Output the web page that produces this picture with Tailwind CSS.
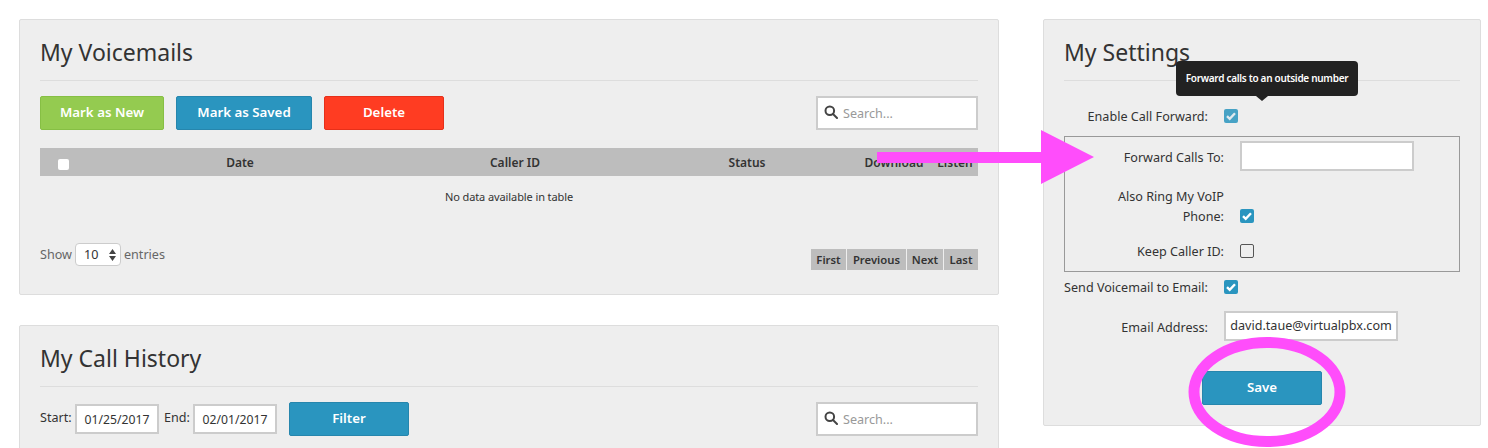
<!DOCTYPE html>
<html lang="en">
<head>
    <meta charset="UTF-8">
    <title>My Voicemails</title>
    <script src="https://cdn.jsdelivr.net/npm/@tailwindcss/browser@4"></script>
</head>
<body class="bg-white">
<div class="relative h-[448px] w-[1488px] overflow-hidden font-['Noto_Sans',sans-serif] text-[12.6px] text-[#333]">
    <div class="flex items-start pl-[19px] pt-[19px]">
        <!-- left column -->
        <div class="flex w-[980px] flex-col gap-[30px]">
            <section class="h-[276px] rounded-[2px] border border-[#ddd] bg-[#eee] px-5 pt-[13px]">
                <h2 class="h-[48px] border-b border-[#ddd] text-[23px] leading-[38px]">My Voicemails</h2>
                <div class="mt-[15px] flex items-center">
                    <button class="h-[34px] w-[124px] rounded-[2px] border border-[#86bf44] bg-[#94cb50] text-[13.3px] font-semibold text-white">Mark as New</button>
                    <button class="ml-3 h-[34px] w-[136px] rounded-[2px] border border-[#2686ad] bg-[#2a95bf] text-[13.3px] font-semibold text-white">Mark as Saved</button>
                    <button class="ml-3 h-[34px] w-[120px] rounded-[2px] border border-[#e6301a] bg-[#ff3c22] text-[13.3px] font-semibold text-white">Delete</button>
                    <div class="ml-auto flex h-[34px] w-[162px] items-center gap-[5px] border-2 border-[#ccc] bg-white pl-[6px] text-[#999]">
                        <svg class="mb-[2px] h-[14px] w-[14px]" viewBox="0 0 14 14" fill="none" stroke="#444" stroke-width="2"><circle cx="5.8" cy="5.8" r="4.3"/><path d="M9 9l4 4" stroke-linecap="round"/></svg>
                        <span class="pt-[3px]">Search...</span>
                    </div>
                </div>
                <div class="mt-[18px] grid h-[28px] grid-cols-[48px_304px_246px_218px_76px_46px] items-center bg-[#bdbdbd] pt-px text-center text-[12px] font-semibold">
                    <span class="ml-[18px] mt-[3px] block h-[11px] w-[11px] rounded-[2px] bg-white"></span>
                    <span>Date</span>
                    <span>Caller ID</span>
                    <span>Status</span>
                    <span>Download</span>
                    <span>Listen</span>
                </div>
                <p class="mt-[12px] text-center text-[11px] leading-[18px] tracking-[-0.1px]">No data available in table</p>
                <div class="mt-[37px] flex items-start justify-between">
                    <div class="flex h-[23px] items-center text-[#666]">
                        <span class="pt-[2px]">Show</span>
                        <span class="ml-[3px] flex h-[23px] w-[46px] items-center justify-between rounded-[4px] border border-[#ccc] bg-white pl-2 pr-[4px] pt-px text-[#333]">
                            10
                            <svg class="h-[12px] w-[7px]" viewBox="0 0 7 12" fill="#444"><path d="M3.5 0L7 5H0zM3.5 12L0 7h7z"/></svg>
                        </span>
                        <span class="ml-[3px] pt-[2px]">entries</span>
                    </div>
                    <div class="mt-[6px] flex h-[21px] items-center gap-px pt-0 text-[11.3px] font-semibold">
                        <span class="flex h-full w-[35px] items-center justify-center bg-[#bdbdbd] pt-[2px]">First</span>
                        <span class="flex h-full w-[59px] items-center justify-center bg-[#bdbdbd] pt-[2px]">Previous</span>
                        <span class="flex h-full w-[36px] items-center justify-center bg-[#bdbdbd] pt-[2px]">Next</span>
                        <span class="flex h-full w-[34px] items-center justify-center bg-[#bdbdbd] pt-[2px]">Last</span>
                    </div>
                </div>
            </section>
            <section class="h-[200px] rounded-[2px] border border-[#ddd] bg-[#eee] px-5 pt-[13px]">
                <h2 class="h-[48px] border-b border-[#ddd] text-[23px] leading-[38px]">My Call History</h2>
                <div class="mt-[15px] flex items-center">
                    <span class="mb-[2px] w-[32px]">Start:</span>
                    <span class="ml-[3px] flex h-[30px] w-[84px] items-center justify-center border-2 border-[#ccc] bg-white pt-[2px] text-[12.2px]">01/25/2017</span>
                    <span class="mb-[2px] ml-[5px] w-[26px]">End:</span>
                    <span class="ml-[3px] flex h-[30px] w-[84px] items-center justify-center border-2 border-[#ccc] bg-white pt-[2px] text-[12.2px]">02/01/2017</span>
                    <button class="ml-3 h-[34px] w-[120px] rounded-[2px] border border-[#2686ad] bg-[#2a95bf] text-[13.3px] font-semibold text-white">Filter</button>
                    <div class="ml-auto flex h-[34px] w-[162px] items-center gap-[5px] border-2 border-[#ccc] bg-white pl-[6px] text-[#999]">
                        <svg class="mb-[2px] h-[14px] w-[14px]" viewBox="0 0 14 14" fill="none" stroke="#444" stroke-width="2"><circle cx="5.8" cy="5.8" r="4.3"/><path d="M9 9l4 4" stroke-linecap="round"/></svg>
                        <span class="pt-[3px]">Search...</span>
                    </div>
                </div>
            </section>
        </div>
        <!-- right column -->
        <section class="ml-[44px] h-[407px] w-[438px] rounded-[2px] border border-[#ddd] bg-[#eee] px-5 pt-[13px]">
            <h2 class="h-[48px] border-b border-[#ddd] text-[23px] leading-[38px]">My Settings</h2>
            <div class="mt-[28px] flex h-[14px] items-center">
                <label class="w-[144px] pt-[2px] text-right">Enable Call Forward:</label>
                <span class="ml-[16px] flex h-[14px] w-[14px] items-center justify-center rounded-[2px] bg-[#2a95bf] opacity-85">
                    <svg class="h-[10px] w-[10px]" viewBox="0 0 10 10" fill="none" stroke="#dfe9ee" stroke-width="2.4"><path d="M1 5.2l2.7 2.6L9 2.2"/></svg>
                </span>
            </div>
            <div class="mt-[13px] h-[136px] border border-[#999]">
                <div class="mt-[4px] flex h-[30px] items-center">
                    <label class="w-[159px] pt-[5px] text-right">Forward Calls To:</label>
                    <span class="ml-[16px] h-[30px] w-[174px] border-2 border-[#ccc] bg-white"></span>
                </div>
                <div class="mt-[16px] flex items-end">
                    <label class="w-[159px] text-right leading-[20px]">Also Ring My VoIP<br>Phone:</label>
                    <span class="mb-[4px] ml-[16px] flex h-[14px] w-[14px] items-center justify-center rounded-[2px] bg-[#2a95bf]">
                        <svg class="h-[10px] w-[10px]" viewBox="0 0 10 10" fill="none" stroke="#fff" stroke-width="2.4"><path d="M1 5.2l2.7 2.6L9 2.2"/></svg>
                    </span>
                </div>
                <div class="mt-[17px] flex h-[14px] items-center">
                    <label class="w-[159px] pt-[2px] text-right">Keep Caller ID:</label>
                    <span class="ml-[16px] h-[14px] w-[14px] rounded-[2px] border border-[#555] bg-[#eee]"></span>
                </div>
            </div>
            <div class="mt-[8px] flex h-[14px] items-center">
                <label class="w-[144px] whitespace-nowrap pt-[2px] text-right">Send Voicemail to Email:</label>
                <span class="ml-[16px] flex h-[14px] w-[14px] items-center justify-center rounded-[2px] bg-[#2a95bf]">
                    <svg class="h-[10px] w-[10px]" viewBox="0 0 10 10" fill="none" stroke="#fff" stroke-width="2.4"><path d="M1 5.2l2.7 2.6L9 2.2"/></svg>
                </span>
            </div>
            <div class="mt-[17px] flex h-[30px] items-center">
                <label class="w-[144px] pt-[5px] text-right">Email Address:</label>
                <span class="ml-[16px] flex h-[30px] w-[174px] items-center justify-center whitespace-nowrap border-2 border-[#ccc] bg-white">david.taue@virtualpbx.com</span>
            </div>
            <button class="ml-[138px] mt-[30px] block h-[34px] w-[120px] rounded-[2px] border border-[#2686ad] bg-[#2a95bf] text-[13.3px] font-semibold text-white">Save</button>
        </section>
    </div>

    <!-- tooltip over the settings heading -->
    <div class="absolute left-[1176px] top-[61px] flex h-[35px] w-[182px] items-center justify-center rounded-[4px] bg-[#222] pb-px text-[10px] font-semibold tracking-[-0.3px] text-white">
        Forward calls to an outside number
        <span class="absolute left-[80px] top-[35px] h-0 w-0 border-x-[6px] border-t-[5px] border-x-transparent border-t-[#222]"></span>
    </div>

    <!-- pink annotations -->
    <svg class="absolute left-0 top-0" width="1488" height="448" fill="none">
        <path d="M877 152H1041V130L1094 157L1041 184V163H877z" fill="#ff4dfb"/>
        <ellipse cx="1267" cy="392" rx="73" ry="49.5" stroke="#ff4dfb" stroke-width="11"/>
    </svg>
</div>
</body>
</html>
